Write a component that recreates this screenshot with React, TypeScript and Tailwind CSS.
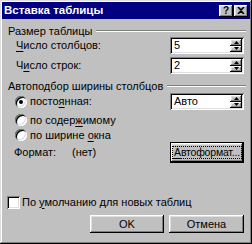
import React from 'react';

const raised =
  'bg-[#c0c0c0] shadow-[inset_-1px_-1px_#000,inset_1px_1px_#fff,inset_-2px_-2px_#808080,inset_2px_2px_#dfdfdf]';
const sunken =
  'bg-white shadow-[inset_1px_1px_#808080,inset_-1px_-1px_#fff,inset_2px_2px_#000,inset_-2px_-2px_#dfdfdf]';

const U: React.FC<{ children: React.ReactNode }> = ({ children }) => (
  <span className="underline underline-offset-[2px]">{children}</span>
);

const Arrow: React.FC<{ up?: boolean }> = ({ up }) => (
  <svg width="5" height="3" viewBox="0 0 5 3">
    <path d={up ? 'M2.5 0 L5 3 L0 3 Z' : 'M0 0 L5 0 L2.5 3 Z'} fill="#000" />
  </svg>
);

const Spinner: React.FC<{ value: string }> = ({ value }) => (
  <div className={`${sunken} w-[74px] h-[17px] flex items-center pl-[4px] pr-[2px]`}>
    <span className="flex-1 leading-none">{value}</span>
    <div className="flex flex-col w-[12px] h-[13px]">
      <div className={`${raised} flex-1 flex items-center justify-center`}>
        <Arrow up />
      </div>
      <div className={`${raised} flex-1 flex items-center justify-center`}>
        <Arrow />
      </div>
    </div>
  </div>
);

const GroupLabel: React.FC<{ text: string }> = ({ text }) => (
  <div className="flex items-center h-[12px] mt-[6px]">
    <span className="leading-none">{text}</span>
    <div className="flex-1 ml-[4px] mr-[-2px] border-t border-t-[#808080] border-b border-b-white" />
  </div>
);

const Radio: React.FC<{ checked?: boolean }> = ({ checked }) => (
  <div className="w-[12px] h-[12px] rounded-full bg-white shadow-[inset_1px_1px_#808080,inset_-1px_-1px_#fff,inset_2px_2px_#000,inset_-2px_-2px_#dfdfdf] flex items-center justify-center">
    {checked && <div className="w-[4px] h-[4px] rounded-full bg-black" />}
  </div>
);

export default function App() {
  return (
    <div className="w-[252px] h-[244px] bg-[#c0c0c0] p-[2px] flex flex-col font-['Liberation_Sans',Arial,sans-serif] text-[11px] text-black shadow-[inset_-1px_-1px_#000,inset_1px_1px_#dfdfdf,inset_-2px_-2px_#808080,inset_2px_2px_#fff]">
      <div className="h-[17px] bg-[#000080] flex items-center pl-[2px] pr-[2px]">
        <span className="flex-1 text-white font-bold leading-none text-[11.5px]">Вставка таблицы</span>
        <div className={`${raised} w-[14px] h-[12px] flex items-center justify-center font-bold text-[10px] leading-none`}>?</div>
        <div className={`${raised} w-[14px] h-[12px] ml-[1px] flex items-center justify-center`}>
          <svg width="8" height="7" viewBox="0 0 8 7">
            <path d="M1 0 L4 3 L7 0 M1 7 L4 4 L7 7" stroke="#000" strokeWidth="1.6" fill="none" />
          </svg>
        </div>
      </div>

      <div className="flex flex-col px-[6px]">
        <GroupLabel text="Размер таблицы" />
        <div className="flex items-center justify-between h-[17px] pl-[8px]">
          <span>
            <U>Ч</U>исло столбцов:
          </span>
          <Spinner value="5" />
        </div>
        <div className="flex items-center justify-between h-[17px] mt-[3px] pl-[8px]">
          <span>
            Ч<U>и</U>сло строк:
          </span>
          <Spinner value="2" />
        </div>

        <GroupLabel text="Автоподбор ширины столбцов" />
        <div className="flex items-center justify-between h-[17px] mt-[1px] pl-[7px]">
          <div className="flex items-center gap-[3px]">
            <Radio checked />
            <span>
              посто<U>я</U>нная:
            </span>
          </div>
          <Spinner value="Авто" />
        </div>
        <div className="flex items-center gap-[3px] h-[16px] mt-[2px] pl-[7px]">
          <Radio />
          <span>
            по содер<U>ж</U>имому
          </span>
        </div>
        <div className="flex items-center gap-[3px] h-[14px] pl-[7px]">
          <Radio />
          <span>
            по ширине <U>о</U>кна
          </span>
        </div>
        <div className="flex items-center h-[21px] pl-[6px]">
          <span className="w-[58px]">Формат:</span>
          <span className="flex-1">(нет)</span>
          <div className="w-[74px] h-[21px] border border-black">
            <div className={`${raised} w-full h-full flex items-center justify-center`}>
              <span className="border border-dotted border-black px-[1px] leading-[11px] text-[10.5px] tracking-[-0.2px] whitespace-nowrap">
                <U>А</U>втоформат...
              </span>
            </div>
          </div>
        </div>

        <div className="flex items-center h-[14px] mt-[32px] -ml-[1px]">
          <div className={`${sunken} w-[13px] h-[13px]`} />
          <span className="ml-[2px]">
            По <U>у</U>молчанию для новых таблиц
          </span>
        </div>

        <div className="flex justify-end gap-[5px] mt-[6px]">
          <div className={`${raised} w-[74px] h-[18px] flex items-center justify-center`}>OK</div>
          <div className={`${raised} w-[75px] h-[18px] flex items-center justify-center`}>Отмена</div>
        </div>
      </div>
    </div>
  );
}
